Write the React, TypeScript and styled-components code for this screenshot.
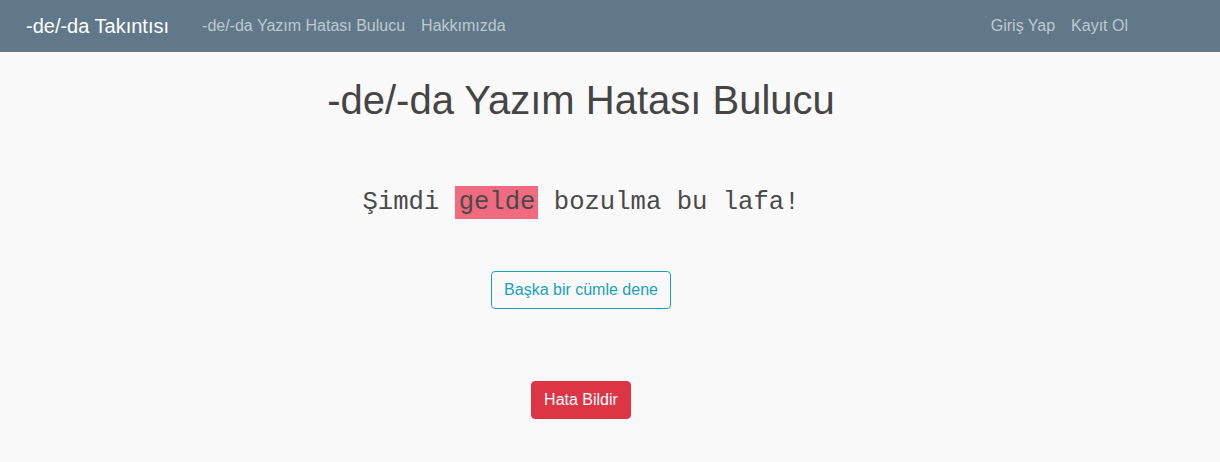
import React from "react";
import styled, { createGlobalStyle } from "styled-components";

const Global = createGlobalStyle`
  html, body { margin: 0; padding: 0; }
  body {
    background: #f9f9f9;
    font-family: "Liberation Sans", Arial, sans-serif;
    color: #212529;
  }
`;

const NavBar = styled.nav`
  height: 52px;
  background: #607889;
  display: flex;
  align-items: center;
  padding: 0 92px 0 26px;
  box-sizing: border-box;
`;

const Brand = styled.a`
  color: #ffffff;
  font-size: 20px;
  margin-right: 33px;
  text-decoration: none;
  line-height: 1;
`;

const NavGroup = styled.div<{ $right?: boolean }>`
  display: flex;
  align-items: center;
  gap: 16px;
  margin-left: ${(p) => (p.$right ? "auto" : "0")};
`;

const NavLink = styled.a`
  color: rgba(255, 255, 255, 0.6);
  font-size: 16px;
  text-decoration: none;
  line-height: 1;
`;

const Main = styled.main`
  display: flex;
  flex-direction: column;
  align-items: center;
  padding: 24px 58px 0 0;
`;

const Title = styled.h1`
  margin: 0;
  font-size: 40px;
  font-weight: 400;
  line-height: 48px;
  color: #454545;
`;

const Sentence = styled.p`
  margin: 62px 0 0;
  font-family: "Liberation Mono", "Courier New", monospace;
  font-size: 25.6px;
  line-height: 33px;
  color: #4a4a4a;
`;

const Mark = styled.span`
  background: #f06a80;
  padding: 2px 3px 2px 4px;
`;

const Button = styled.button<{ $variant: "outline" | "danger" }>`
  font-family: "Liberation Sans", Arial, sans-serif;
  font-size: 16px;
  line-height: 24px;
  padding: 6px 12px;
  border-radius: 4px;
  border: 1px solid ${(p) => (p.$variant === "danger" ? "#dc3545" : "#17a2b8")};
  background: ${(p) => (p.$variant === "danger" ? "#dc3545" : "transparent")};
  color: ${(p) => (p.$variant === "danger" ? "#ffffff" : "#17a2b8")};
  cursor: pointer;
`;

const ButtonRow = styled.div<{ $top: number }>`
  margin-top: ${(p) => p.$top}px;
  display: flex;
  justify-content: center;
`;

export default function App() {
  return (
    <>
      <Global />
      <NavBar>
        <Brand href="#">-de/-da Takıntısı</Brand>
        <NavGroup>
          <NavLink href="#">-de/-da Yazım Hatası Bulucu</NavLink>
          <NavLink href="#">Hakkımızda</NavLink>
        </NavGroup>
        <NavGroup $right>
          <NavLink href="#">Giriş Yap</NavLink>
          <NavLink href="#">Kayıt Ol</NavLink>
        </NavGroup>
      </NavBar>
      <Main>
        <Title>-de/-da Yazım Hatası Bulucu</Title>
        <Sentence>
          Şimdi <Mark>gelde</Mark> bozulma bu lafa!
        </Sentence>
        <ButtonRow $top={52}>
          <Button $variant="outline">Başka bir cümle dene</Button>
        </ButtonRow>
        <ButtonRow $top={72}>
          <Button $variant="danger">Hata Bildir</Button>
        </ButtonRow>
      </Main>
    </>
  );
}
